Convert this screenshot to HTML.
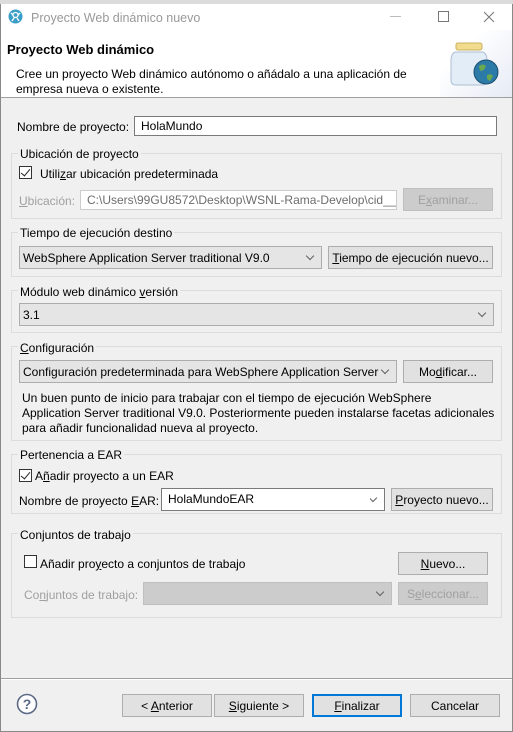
<!DOCTYPE html>
<html><head><meta charset="utf-8"><style>
*{margin:0;padding:0;box-sizing:border-box}
body{width:513px;height:732px;position:relative;background:#f0f0f0;font-family:"Liberation Sans",sans-serif;font-size:12px;color:#000;overflow:hidden}
.a{position:absolute;white-space:nowrap}
.t{position:absolute;white-space:nowrap;line-height:14px;margin-top:1px}
.grp{position:absolute;border:1px solid #dcdcdc}
.gl{position:absolute;background:#f0f0f0;padding:0 2px;line-height:14px;white-space:nowrap;margin-top:1px}
.btn{position:absolute;border:1px solid #adadad;background:#e1e1e1;text-align:center;line-height:22px;white-space:nowrap}
.btn.d{color:#a0a0a0;background:#cccccc;border-color:#bfbfbf}
.inp{position:absolute;border:1px solid #7a7a7a;background:#fff;line-height:19px;padding-left:6px;white-space:nowrap;overflow:hidden}
.cmb{position:absolute;border:1px solid #adadad;background:#e5e5e5;line-height:22px;padding-left:3px;white-space:nowrap;overflow:hidden}
.cmb:after{content:"";position:absolute;right:8px;top:6px;width:5px;height:5px;border-right:1px solid #606060;border-bottom:1px solid #606060;transform:rotate(45deg)}
.cb{position:absolute;width:13px;height:13px;border:1px solid #333;background:#fff}
.ck:after{content:"";position:absolute;left:3px;top:0px;width:4px;height:8px;border-right:1.3px solid #222;border-bottom:1.3px solid #222;transform:rotate(40deg)}
u{text-decoration:underline}
</style></head><body>
<div class="a" style="left:0;top:0;width:513px;height:4px;background:#dcdcdc"></div>
<div class="a" style="left:0;top:4px;width:513px;height:94px;background:#fff;border-left:1px solid #888;border-right:1px solid #888"></div>
<div class="a" style="left:0;top:98px;width:1px;height:634px;background:#888"></div>
<div class="a" style="left:512px;top:98px;width:1px;height:634px;background:#888"></div>
<div class="a" style="left:0;top:731px;width:513px;height:1px;background:#888"></div>
<svg class="a" style="left:8px;top:9px" width="15" height="15" viewBox="0 0 15 15"><circle cx="7.5" cy="7.5" r="7" fill="#3a9fc8"/><circle cx="7.5" cy="6" r="2.5" fill="none" stroke="#fff" stroke-width="1.3"/><path d="M3 4l2 2M12 4l-2 2M4 12l2-3M11 12l-2-3" stroke="#fff" stroke-width="1.3"/></svg>
<div class="t" style="left:31px;top:10px;color:#999;font-size:12.5px">Proyecto Web dinámico nuevo</div>
<div class="a" style="left:390px;top:16px;width:11px;height:1px;background:#bbb"></div>
<div class="a" style="left:438px;top:11px;width:11px;height:11px;border:1px solid #777"></div>
<svg class="a" style="left:483px;top:11px" width="12" height="12"><path d="M1 1L11 11M11 1L1 11" stroke="#777" stroke-width="1"/></svg>
<div class="t" style="left:7px;top:42px;font-weight:bold;font-size:13px">Proyecto Web dinámico</div>
<div class="t" style="left:16px;top:66px">Cree un proyecto Web dinámico autónomo o añádalo a una aplicación de</div>
<div class="t" style="left:16px;top:81px">empresa nueva o existente.</div>
<div class="a" style="left:440px;top:30px;width:72px;height:67px;background:linear-gradient(135deg,#fff 30%,#e6ebf5)"></div>
<svg class="a" style="left:448px;top:40px" width="52" height="48" viewBox="0 0 52 48"><rect x="8" y="3" width="26" height="7" rx="2" fill="#f1dc8e" stroke="#c9b060"/><path d="M7 12h28q4 2 4 8v20q0 5-5 5H8q-5 0-5-5V20q0-6 4-8z" fill="#e3edf7" stroke="#aebfd2"/><circle cx="38" cy="32" r="12" fill="#2c7aa8" stroke="#1a4e6e"/><path d="M31 26q4-3 7 0l-2 4-4 1zM39 35q4-2 6 1l-3 5-3-2z" fill="#6aa84f"/></svg>
<div class="a" style="left:1px;top:97px;width:511px;height:1px;background:#a0a0a0"></div>

<div class="t" style="left:17px;top:119px">Nombre de proyecto:</div>
<div class="inp" style="left:134px;top:116px;width:363px;height:20px">HolaMundo</div>

<div class="grp" style="left:11px;top:153px;width:491px;height:66px"></div>
<div class="gl" style="left:18px;top:146px">Ubicación de proyecto</div>
<div class="cb ck" style="left:19px;top:166px"></div>
<div class="t" style="left:40px;top:166px">Utili<u>z</u>ar ubicación predeterminada</div>
<div class="t" style="left:19px;top:193px;color:#a0a0a0"><u>U</u>bicación:</div>
<div class="inp" style="left:80px;top:190px;width:317px;height:20px;border-color:#ccc;color:#6d6d6d">C:\Users\99GU8572\Desktop\WSNL-Rama-Develop\cid__ibm</div>
<div class="btn d" style="left:403px;top:188px;width:90px;height:23px;line-height:22px">E<u>x</u>aminar...</div>

<div class="grp" style="left:11px;top:232px;width:491px;height:45px"></div>
<div class="gl" style="left:18px;top:225px">Tiempo de ejecución destino</div>
<div class="cmb" style="left:19px;top:246px;width:303px;height:23px">WebSphere Application Server traditional V9.0</div>
<div class="btn" style="left:328px;top:246px;width:165px;height:23px"><u>T</u>iempo de ejecución nuevo...</div>

<div class="grp" style="left:11px;top:290px;width:491px;height:43px"></div>
<div class="gl" style="left:18px;top:284px">Módulo web dinámico <u>v</u>ersión</div>
<div class="cmb" style="left:19px;top:303px;width:475px;height:23px">3.1</div>

<div class="grp" style="left:11px;top:346px;width:491px;height:95px"></div>
<div class="gl" style="left:18px;top:340px"><u>C</u>onfiguración</div>
<div class="cmb" style="left:19px;top:360px;width:378px;height:23px">Configuración predeterminada para WebSphere Application Server</div>
<div class="btn" style="left:403px;top:360px;width:90px;height:23px">Mo<u>d</u>ificar...</div>
<div class="t" style="left:22px;top:390px">Un buen punto de inicio para trabajar con el tiempo de ejecución WebSphere</div>
<div class="t" style="left:22px;top:405px">Application Server traditional V9.0. Posteriormente pueden instalarse facetas adicionales</div>
<div class="t" style="left:22px;top:420px">para añadir funcionalidad nueva al proyecto.</div>

<div class="grp" style="left:11px;top:454px;width:491px;height:60px"></div>
<div class="gl" style="left:18px;top:447px">Pertenencia a EAR</div>
<div class="cb ck" style="left:19px;top:469px"></div>
<div class="t" style="left:35px;top:468px">A<u>ñ</u>adir proyecto a un EAR</div>
<div class="t" style="left:19px;top:493px">Nombre de proyecto <u>E</u>AR:</div>
<div class="inp" style="left:161px;top:488px;width:224px;height:23px;line-height:21px">HolaMundoEAR</div>
<div class="cmb" style="left:370px;top:489px;width:14px;height:21px;border:none;background:transparent"></div>
<div class="btn" style="left:391px;top:488px;width:102px;height:23px"><u>P</u>royecto nuevo...</div>

<div class="grp" style="left:11px;top:533px;width:491px;height:85px"></div>
<div class="gl" style="left:18px;top:527px">Conjuntos de trabajo</div>
<div class="cb" style="left:24px;top:555px"></div>
<div class="t" style="left:40px;top:556px">Añadir pro<u>y</u>ecto a conjuntos de trabajo</div>
<div class="btn" style="left:398px;top:552px;width:90px;height:23px"><u>N</u>uevo...</div>
<div class="t" style="left:24px;top:587px;color:#a0a0a0">Co<u>n</u>juntos de trabajo:</div>
<div class="cmb" style="left:143px;top:582px;width:249px;height:23px;background:#cccccc;border-color:#bfbfbf"></div>
<div class="btn d" style="left:398px;top:582px;width:90px;height:23px">S<u>e</u>leccionar...</div>

<div class="a" style="left:1px;top:678px;width:511px;height:1px;background:#a0a0a0"></div>
<div class="a" style="left:1px;top:679px;width:511px;height:1px;background:#fff"></div>
<svg class="a" style="left:16px;top:693px" width="22" height="22" viewBox="0 0 22 22"><circle cx="11" cy="11" r="9.5" fill="#fff" stroke="#5a6a86" stroke-width="1.6"/><text x="11" y="16" text-anchor="middle" font-family="Liberation Sans" font-weight="bold" font-size="14" fill="#5a6a86">?</text></svg>
<div class="btn" style="left:122px;top:694px;width:90px;height:23px">&lt; <u>A</u>nterior</div>
<div class="btn" style="left:214px;top:694px;width:90px;height:23px"><u>S</u>iguiente &gt;</div>
<div class="btn" style="left:312px;top:694px;width:90px;height:23px;border:2px solid #0078d7;line-height:20px"><u>F</u>inalizar</div>
<div class="btn" style="left:410px;top:694px;width:90px;height:23px">Cancelar</div>
</body></html>
